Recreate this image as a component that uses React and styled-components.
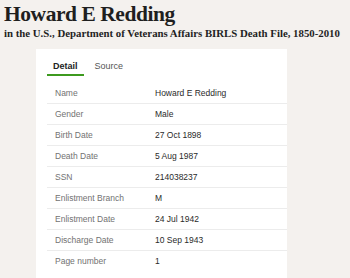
import React from "react";
import styled, { createGlobalStyle } from "styled-components";

const Global = createGlobalStyle`
  html, body { margin: 0; padding: 0; background: #f4f1ee; }
  body { width: 350px; height: 278px; overflow: hidden; }
`;

const Page = styled.div`
  display: flex;
  flex-direction: column;
  height: 278px;
`;

const Header = styled.header`
  padding: 1px 0 0 4px;
  font-family: "Liberation Serif", "Times New Roman", serif;
  color: #1f1f1f;
`;

const Title = styled.h1`
  margin: 0;
  font-size: 21.5px;
  line-height: 26px;
  font-weight: 700;
  letter-spacing: -0.45px;
`;

const Subtitle = styled.div`
  font-size: 10.8px;
  line-height: 12px;
  font-weight: 700;
  white-space: nowrap;
`;

const Card = styled.section`
  flex: 1;
  margin: 10px 0 0 36px;
  width: 251px;
  background: #fff;
  padding: 10px 0 0 11px;
  box-sizing: border-box;
  font-family: "Liberation Sans", Arial, sans-serif;
`;

const Tabs = styled.nav`
  display: flex;
  gap: 5px;
`;

const Tab = styled.div`
  padding: 0 6px 1px;
  font-size: 9px;
  line-height: 14px;
  font-weight: ${(p) => (p.$active ? 700 : 400)};
  color: ${(p) => (p.$active ? "#222" : "#555")};
  border-bottom: 2px solid ${(p) => (p.$active ? "#3d9a1f" : "transparent")};
`;

const List = styled.dl`
  margin: 7px 0 0;
  display: flex;
  flex-direction: column;
`;

const Row = styled.div`
  display: grid;
  grid-template-columns: 100px 1fr;
  align-items: center;
  height: 20px;
  padding-left: 8px;
  border-bottom: 1px solid ${(p) => (p.$last ? "transparent" : "#ececec")};
  font-size: 8.5px;
`;

const Label = styled.dt`
  color: #727272;
`;

const Value = styled.dd`
  margin: 0;
  color: #2a2a2a;
`;

const rows = [
  ["Name", "Howard E Redding"],
  ["Gender", "Male"],
  ["Birth Date", "27 Oct 1898"],
  ["Death Date", "5 Aug 1987"],
  ["SSN", "214038237"],
  ["Enlistment Branch", "M"],
  ["Enlistment Date", "24 Jul 1942"],
  ["Discharge Date", "10 Sep 1943"],
  ["Page number", "1"],
];

export default function App() {
  return (
    <Page>
      <Global />
      <Header>
        <Title>Howard E Redding</Title>
        <Subtitle>
          in the U.S., Department of Veterans Affairs BIRLS Death File, 1850-2010
        </Subtitle>
      </Header>
      <Card>
        <Tabs>
          <Tab $active>Detail</Tab>
          <Tab>Source</Tab>
        </Tabs>
        <List>
          {rows.map(([l, v], i) => (
            <Row key={l} $last={i === rows.length - 1}>
              <Label>{l}</Label>
              <Value>{v}</Value>
            </Row>
          ))}
        </List>
      </Card>
    </Page>
  );
}
